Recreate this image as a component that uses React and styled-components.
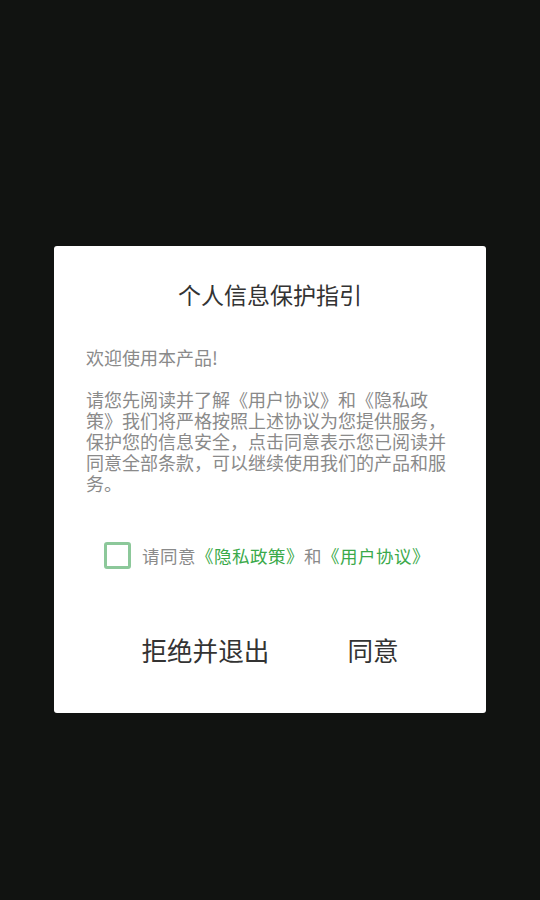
import React, { useState } from 'react';
import styled, { createGlobalStyle } from 'styled-components';

const GlobalStyle = createGlobalStyle`
  html, body {
    margin: 0;
    padding: 0;
    background: #111311;
  }
  body {
    font-family: "Noto Sans CJK SC", "Noto Sans", sans-serif;
  }
`;

const Screen = styled.div`
  width: 540px;
  height: 900px;
  background: #111311;
  overflow: hidden;
`;

const Dialog = styled.div`
  width: 432px;
  height: 467px;
  margin: 246px 0 0 54px;
  background: #ffffff;
  border-radius: 3px;
  box-sizing: border-box;
  display: flex;
  flex-direction: column;
`;

const Title = styled.div`
  padding-top: 33px;
  font-size: 23px;
  line-height: 30px;
  color: #333333;
  text-align: center;
`;

const Content = styled.div`
  margin-top: 38px;
  padding: 0 32px;
  font-size: 18px;
  line-height: 21px;
  color: #8a8a8a;
`;

const Para = styled.p`
  margin: 0 0 ${p => (p.$gap ? '21px' : '0')};
`;

const AgreeRow = styled.label`
  margin-top: 48px;
  padding-left: 50px;
  display: flex;
  align-items: center;
  gap: 11px;
  font-size: 17.5px;
  line-height: 27px;
  letter-spacing: 0.5px;
  color: #8a8a8a;
  cursor: pointer;
`;

const Box = styled.span`
  width: 27px;
  height: 27px;
  box-sizing: border-box;
  border: 3px solid #8cc89a;
  border-radius: 3px;
  background: ${p => (p.$checked ? '#8cc89a' : '#fff')};
  flex-shrink: 0;
`;

const Link = styled.span`
  color: #3aa94a;
`;

const Actions = styled.div`
  margin-top: 63px;
  display: flex;
  justify-content: center;
  gap: 78px;
`;

const ActionButton = styled.button`
  border: none;
  background: none;
  padding: 0;
  font-family: inherit;
  font-size: 25.6px;
  line-height: 36px;
  color: #333333;
  cursor: pointer;
`;

export default function App() {
  const [checked, setChecked] = useState(false);

  return (
    <Screen>
      <GlobalStyle />
      <Dialog>
        <Title>个人信息保护指引</Title>
        <Content>
          <Para $gap>欢迎使用本产品!</Para>
          <Para>
            请您先阅读并了解《用户协议》和《隐私政策》我们将严格按照上述协议为您提供服务，保护您的信息安全，点击同意表示您已阅读并同意全部条款，可以继续使用我们的产品和服务。
          </Para>
        </Content>
        <AgreeRow onClick={() => setChecked(!checked)}>
          <Box $checked={checked} />
          <span>
            请同意<Link>《隐私政策》</Link>和<Link>《用户协议》</Link>
          </span>
        </AgreeRow>
        <Actions>
          <ActionButton>拒绝并退出</ActionButton>
          <ActionButton>同意</ActionButton>
        </Actions>
      </Dialog>
    </Screen>
  );
}
